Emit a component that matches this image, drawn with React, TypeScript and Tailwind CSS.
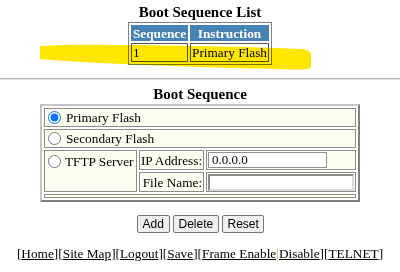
import React from "react";

// Boot sequence config page (old switch web UI look)

const links = ["Home", "Site Map", "Logout", "Save"];

const cellBorder = "border border-[#8c8c8c]";

const BootSequenceList: React.FC = () => (
  <div className="flex flex-col items-center">
    <h2 className="mt-[4px] text-[15px] font-bold leading-[16px]">Boot Sequence List</h2>
    <table className="mt-[2px] border-separate border-spacing-[2px] border border-[#808080] text-[13.3px] leading-[15px] whitespace-nowrap">
      <thead>
        <tr>
          <th className="h-[16px] w-[57px] bg-[#4682b4] px-[1px] font-bold text-white">Sequence</th>
          <th className="h-[16px] w-[79px] bg-[#4682b4] px-[1px] font-bold text-white">Instruction</th>
        </tr>
      </thead>
      <tbody>
        <tr>
          <td className="h-[19px] border border-[#555] px-[1px] text-left">1</td>
          <td className="h-[19px] border border-[#555] px-[1px] text-left">Primary Flash</td>
        </tr>
      </tbody>
    </table>
  </div>
);

const BootSequenceForm: React.FC = () => (
  <div className="flex flex-col items-center">
    <h2 className="mt-[6px] text-[15px] font-bold leading-[16px]">Boot Sequence</h2>
    <table className="mt-[2px] border-separate border-spacing-[2px] border-2 border-t-[#c4c4c4] border-l-[#c4c4c4] border-r-[#808080] border-b-[#808080] text-[13.3px] leading-[15px] whitespace-nowrap">
      <tbody>
        <tr>
          <td colSpan={3} className={`h-[19px] bg-[#fefef0] ${cellBorder}`}>
            <label className="flex items-center">
              <input type="radio" name="boot" defaultChecked className="ml-[3px] mr-[5px] h-[13px] w-[13px]" />
              Primary Flash
            </label>
          </td>
        </tr>
        <tr>
          <td colSpan={3} className={`h-[19px] bg-[#fefef0] ${cellBorder}`}>
            <label className="flex items-center">
              <input type="radio" name="boot" className="ml-[3px] mr-[5px] h-[13px] w-[13px]" />
              Secondary Flash
            </label>
          </td>
        </tr>
        <tr>
          <td rowSpan={2} className={`w-[93px] bg-[#fefef0] align-top pt-[3px] ${cellBorder}`}>
            <label className="flex items-center">
              <input type="radio" name="boot" className="ml-[3px] mr-[4px] h-[13px] w-[13px]" />
              TFTP Server
            </label>
          </td>
          <td className={`h-[20px] w-[64px] bg-[#fefef0] px-[1px] ${cellBorder}`}>IP Address:</td>
          <td className={`h-[20px] bg-[#fefef0] px-[1px] ${cellBorder}`}>
            <input
              type="text"
              defaultValue="0.0.0.0"
              className="block h-[16px] w-[119px] border border-[#8f8f8f] bg-white px-[3px] text-[13px] leading-[14px] outline-none"
            />
          </td>
        </tr>
        <tr>
          <td className={`h-[20px] bg-[#fefef0] px-[1px] text-right ${cellBorder}`}>File Name:</td>
          <td className={`h-[20px] bg-[#fefef0] px-[1px] ${cellBorder}`}>
            <input
              type="text"
              className="block h-[17px] w-[146px] border-2 border-t-[#8a8a8a] border-l-[#8a8a8a] border-r-[#dadada] border-b-[#dadada] bg-white px-[2px] text-[13px] outline-none"
            />
          </td>
        </tr>
        <tr>
          <td colSpan={3} className={`h-[4px] bg-[#fefef0] ${cellBorder}`}></td>
        </tr>
      </tbody>
    </table>
  </div>
);

const btn =
  "h-[18px] rounded-[2px] border border-[#767676] bg-[#efefef] px-[5px] font-['Liberation_Sans',Arial,sans-serif] text-[12px] leading-[14px] text-black";

export default function App() {
  return (
    <div className="relative h-[272px] w-[400px] overflow-hidden bg-white font-['Liberation_Serif','Times_New_Roman',serif] text-black">
      <BootSequenceList />

      {/* yellow marker stroke over the list */}
      <svg className="pointer-events-none absolute left-0 top-0 mix-blend-multiply" width="400" height="80" viewBox="0 0 400 80">
        <path
          d="M40 46 C70 44 100 45 140 45 C200 46 260 47 300 49 C306 49 311 51 311 55 L311 67 C309 70 300 70 280 69 C220 68 160 66 100 63 C75 62 55 60 40 59 Z"
          fill="#ffe600"
        />
      </svg>

      <div className="mt-[13px] h-[2px] border-t border-b border-t-[#b4b4b4] border-b-[#dcdcdc]" />

      <BootSequenceForm />

      <div className="mt-[13px] flex justify-center gap-[3px]">
        <button className={`${btn} w-[33px]`}>Add</button>
        <button className={`${btn} w-[46px]`}>Delete</button>
        <button className={`${btn} w-[42px]`}>Reset</button>
      </div>

      <div className="mt-[13px] text-center text-[13.3px] leading-[16px] whitespace-nowrap">
        {links.map((l) => (
          <span key={l}>
            [<a className="underline">{l}</a>]
          </span>
        ))}
        [<a className="underline">Frame Enable</a>
        <span className="text-[#e0a060]">|</span>
        <a className="underline">Disable</a>][<a className="underline">TELNET</a>]
      </div>
    </div>
  );
}
